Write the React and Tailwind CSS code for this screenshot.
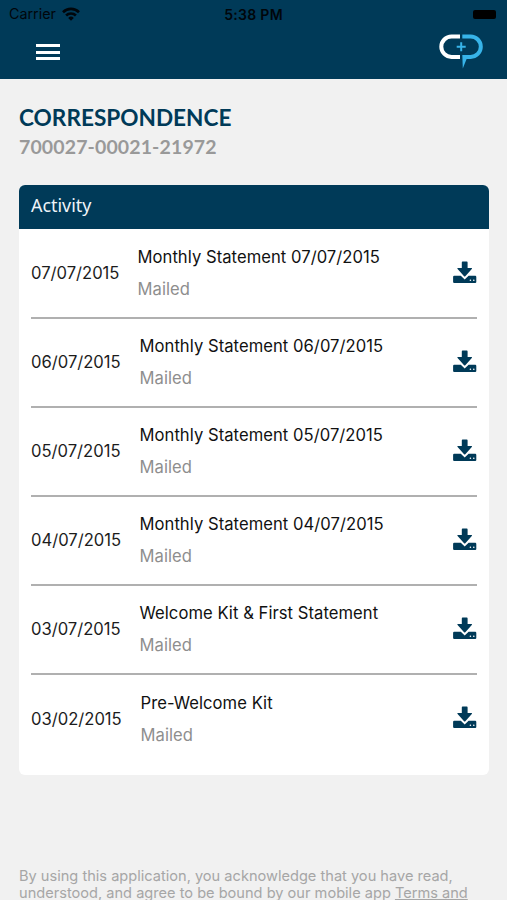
import React from 'react';

const activity = [
  { date: '07/07/2015', title: 'Monthly Statement 07/07/2015', status: 'Mailed', dateCol: 'w-[106.5px]' },
  { date: '06/07/2015', title: 'Monthly Statement 06/07/2015', status: 'Mailed', dateCol: 'w-[108.5px]' },
  { date: '05/07/2015', title: 'Monthly Statement 05/07/2015', status: 'Mailed', dateCol: 'w-[108.5px]' },
  { date: '04/07/2015', title: 'Monthly Statement 04/07/2015', status: 'Mailed', dateCol: 'w-[108.5px]' },
  { date: '03/07/2015', title: 'Welcome Kit & First Statement', status: 'Mailed', dateCol: 'w-[108.5px]' },
  { date: '03/02/2015', title: 'Pre-Welcome Kit', status: 'Mailed', dateCol: 'w-[109.5px]' },
];

const WifiIcon = () => (
  <svg width="18" height="14" viewBox="0 0 18 14" fill="none" stroke="#00060b" strokeWidth="2.6">
    <path d="M1 5.2a11.4 11.4 0 0 1 16 0" />
    <path d="M4.1 8.5a6.9 6.9 0 0 1 9.8 0" />
    <path d="M9 13.8 6.2 10.9a4 4 0 0 1 5.6 0z" fill="#00060b" stroke="none" />
  </svg>
);

const Logo = () => (
  <svg width="44" height="36" viewBox="0 0 44 36" fill="none">
    <path d="M21 3.5H12.5a10.2 10.2 0 0 0 0 20.4H21" stroke="#fff" strokeWidth="4" />
    <path d="M23.3 3.5H31.6a10.2 10.2 0 0 1 0 20.4h-6.3" stroke="#37b4e9" strokeWidth="4" />
    <path d="M23.3 21.9h5.2L27.6 25.9 23.8 35.5z" fill="#37b4e9" />
    <path d="M22.2 9.3v9M17.7 13.8h9" stroke="#37b4e9" strokeWidth="2" />
  </svg>
);

// arrow dropping into a drive with two lights
const DownloadIcon = () => (
  <svg width="24" height="25" viewBox="0 0 24 25" className="shrink-0" fill="#003a58">
    <path d="M1.2 14.8h6.6l3.9 3.6 3.9-3.6h6.6a1.1 1.1 0 0 1 1.1 1.1v5a1.1 1.1 0 0 1-1.1 1.1h-21a1.1 1.1 0 0 1-1.1-1.1v-5a1.1 1.1 0 0 1 1.1-1.1z" />
    <path d="M9.6.6h4.2a.8.8 0 0 1 .8.8v5.5h3.8c.6 0 .8.6.4 1L12.3 15.3a.9.9 0 0 1-1.2 0L4.6 7.9c-.4-.4-.2-1 .4-1h3.8V1.4a.8.8 0 0 1 .8-.8z" />
    <circle cx="17.4" cy="19.3" r=".8" fill="#fff" />
    <circle cx="20.8" cy="19.3" r=".8" fill="#fff" />
  </svg>
);

const Header = () => (
  <header className="h-[79px] bg-[#003a58]">
    <div className="flex h-[28px] items-center pl-[9px] pr-[11px] text-[#00060b]">
      <div className="flex flex-1 items-center gap-[6px]">
        <span className="text-[14.3px]">Carrier</span>
        <WifiIcon />
      </div>
      <span className="pl-[2px] text-[14px] font-semibold tracking-[0.3px]">5:38 PM</span>
      <div className="flex flex-1 justify-end">
        <span className="h-[9px] w-[23px] rounded-[2px] bg-black" />
      </div>
    </div>
    <div className="flex items-start justify-between pl-[36px] pr-[24px]">
      <button aria-label="Menu" className="flex w-6 flex-col gap-[3.5px] pt-4">
        <span className="h-[3px] bg-white" />
        <span className="h-[3px] bg-white" />
        <span className="h-[3px] bg-white" />
      </button>
      <div className="pt-[5px]">
        <Logo />
      </div>
    </div>
  </header>
);

const ActivityRow = ({ item }) => (
  <li className="flex h-[89.1px] items-center border-b-2 border-[#b0b0b0] last:border-transparent">
    <span className={`shrink-0 whitespace-nowrap pt-px text-[16.6px] text-[#1c1c1c] ${item.dateCol}`}>{item.date}</span>
    <div className="flex-1 whitespace-nowrap text-[16.6px] leading-8 tracking-[0.05px]">
      <p className="text-[#111]">{item.title}</p>
      <p className="text-[#8e8e8e]">{item.status}</p>
    </div>
    <DownloadIcon />
  </li>
);

export default function App() {
  return (
    <div className="h-[900px] overflow-hidden bg-[#f1f1f1] font-[Inter,sans-serif]">
      <Header />
      <main className="px-[19px] pt-[25px]">
        <h1 className="font-[Lato,sans-serif] text-[22.6px] font-bold leading-7 text-[#003a58]">CORRESPONDENCE</h1>
        <p className="pt-px font-[Lato,sans-serif] text-[19.5px] font-bold leading-7 tracking-[0.12px] text-[#999]">
          700027-00021-21972
        </p>

        <section className="mt-6 h-[590px] w-[470px] overflow-hidden rounded-[6px] bg-white">
          <h2 className="flex h-[44px] items-center bg-[#003a58] px-3 pb-1 font-['Noto_Sans',sans-serif] text-[17.9px] text-[#eef4f8]">
            Activity
          </h2>
          <ul className="px-3 pt-[0.5px]">
            {activity.map((item) => (
              <ActivityRow key={item.date} item={item} />
            ))}
          </ul>
        </section>

        <footer className="mt-[93px] whitespace-nowrap text-[14.6px] leading-[17px] text-[#a6a6a6]">
          <p>By using this application, you acknowledge that you have read,</p>
          <p>
            understood, and agree to be bound by our mobile app{' '}
            <a className="underline decoration-1 underline-offset-1">Terms and</a>
          </p>
        </footer>
      </main>
    </div>
  );
}
